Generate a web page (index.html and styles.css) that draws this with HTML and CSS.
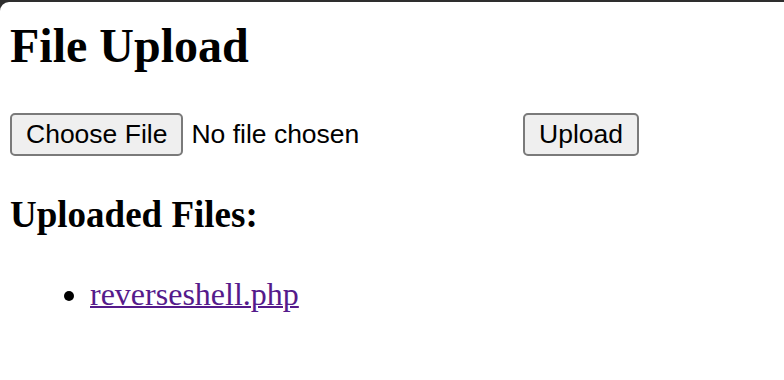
FILE: index.html
```html
<!DOCTYPE html>
<html lang="en">
<head>
<meta charset="utf-8">
<title>File Upload</title>
<link rel="stylesheet" href="styles.css">
</head>
<body>
<div class="page">
  <h1 class="title">File Upload</h1>
  <form class="upload-form">
    <div class="file-picker">
      <button type="button" class="btn">Choose File</button>
      <span class="file-status">No file chosen</span>
    </div>
    <button type="submit" class="btn">Upload</button>
  </form>
  <h2 class="subtitle">Uploaded Files:</h2>
  <ul class="file-list">
    <li><a class="file-link" href="#">reverseshell.php</a></li>
  </ul>
</div>
</body>
</html>
```
FILE: styles.css
```css
html {
  background: #2e2e2e;
}
body {
  margin: 0;
  padding-top: 2px;
  background: #2e2e2e;
}
.page {
  background: #ffffff;
  border-top-left-radius: 9px;
  min-height: 378px;
  padding: 17px 10px 0 10px;
  box-sizing: border-box;
  font-family: "Liberation Serif", "Times New Roman", serif;
  color: #000;
}
.title {
  margin: 0;
  font-size: 48px;
  line-height: 54px;
  font-weight: bold;
}
.upload-form {
  margin-top: 40px;
  display: flex;
  align-items: center;
  gap: 4px;
}
.file-picker {
  width: 509px;
  display: flex;
  align-items: center;
  gap: 8px;
}
.btn {
  height: 43px;
  box-sizing: border-box;
  margin: 0;
  padding: 0 14px;
  border: 2px solid #7a7a7a;
  border-radius: 5px;
  background: #efefef;
  color: #000;
  font-family: "Liberation Sans", Arial, sans-serif;
  font-size: 26.5px;
  line-height: 39px;
}
.file-status {
  font-family: "Liberation Sans", Arial, sans-serif;
  font-size: 26.5px;
  line-height: 39px;
}
.subtitle {
  margin: 38px 0 0 0;
  font-size: 37px;
  line-height: 42px;
  font-weight: bold;
}
.file-list {
  margin: 40px 0 0 0;
  padding-left: 80px;
  font-size: 32px;
  line-height: 37px;
  list-style: disc;
}
.file-link {
  color: #551a8b;
  text-decoration: underline;
  text-decoration-thickness: 2px;
}
```
